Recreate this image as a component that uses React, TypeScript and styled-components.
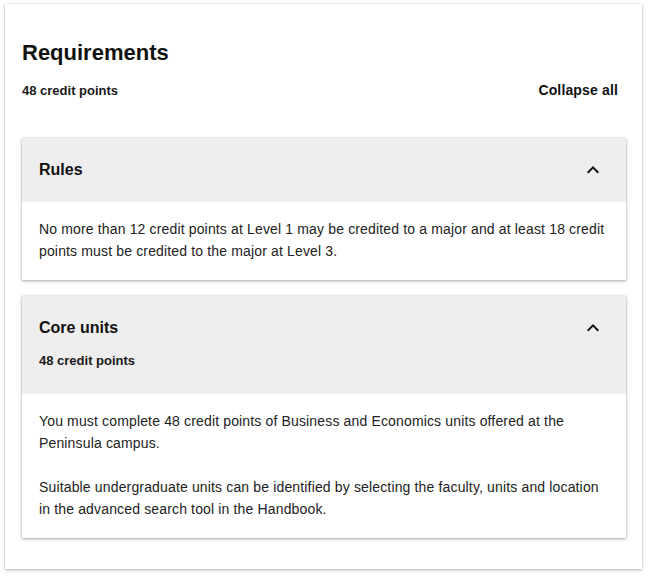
import React from "react";
import styled, { createGlobalStyle } from "styled-components";

const Global = createGlobalStyle`
  html, body { margin: 0; padding: 0; background: #ffffff; }
  body { font-family: "Liberation Sans", Arial, sans-serif; color: #1a1a1a; }
  * { box-sizing: border-box; }
`;

const Page = styled.div`
  padding: 4px 6px 8px 5px;
`;

const Panel = styled.section`
  background: #fff;
  box-shadow: 0 1px 3px rgba(0, 0, 0, 0.3), 0 0 1px rgba(0, 0, 0, 0.15);
  padding: 36px 16px 31px 17px;
`;

const Title = styled.h2`
  margin: 0;
  font-size: 22px;
  line-height: 26px;
  font-weight: 700;
  color: #111;
`;

const SummaryRow = styled.div`
  display: flex;
  align-items: center;
  justify-content: space-between;
  margin-top: 14px;
  height: 20px;
  padding-right: 8px;
`;

const Credits = styled.span`
  font-size: 13px;
  font-weight: 700;
  color: #1a1a1a;
`;

const CollapseAll = styled.button`
  border: 0;
  background: none;
  padding: 0;
  font-family: inherit;
  font-size: 14px;
  letter-spacing: 0.15px;
  font-weight: 700;
  color: #111;
  cursor: pointer;
`;

const List = styled.div`
  display: flex;
  flex-direction: column;
  gap: 16px;
  margin-top: 38px;
`;

const Card = styled.div`
  background: #fff;
  box-shadow: 0 1px 3px rgba(0, 0, 0, 0.35), 0 0 1px rgba(0, 0, 0, 0.12);
`;

const Header = styled.div`
  display: flex;
  align-items: flex-start;
  justify-content: space-between;
  background: #eeeeee;
  padding: 20px 21px 20px 17px;
`;

const HeaderText = styled.div`
  display: flex;
  flex-direction: column;
`;

const CardTitle = styled.h3`
  margin: 0;
  font-size: 16px;
  line-height: 24px;
  font-weight: 700;
  color: #111;
`;

const SubCredits = styled.div`
  margin: 11px 0 3px;
  font-size: 13px;
  line-height: 20px;
  font-weight: 700;
  color: #1a1a1a;
`;

const Toggle = styled.button`
  width: 24px;
  height: 24px;
  border: 0;
  padding: 0;
  background: none;
  display: flex;
  align-items: center;
  justify-content: center;
  color: #111;
  cursor: pointer;
`;

const Body = styled.div`
  padding: 16px 17px 18px;
  font-size: 14px;
  line-height: 22px;
  letter-spacing: 0.15px;
  color: #222;
`;

const Para = styled.p`
  margin: 0;
  & + & { margin-top: 22px; }
`;

const Chevron = () => (
  <svg width="24" height="24" viewBox="0 0 24 24" fill="currentColor">
    <path d="M12 8l-6 6 1.41 1.41L12 10.83l4.59 4.58L18 14z" />
  </svg>
);

type Section = { title: string; credits?: string; paras: string[] };

const sections: Section[] = [
  {
    title: "Rules",
    paras: [
      "No more than 12 credit points at Level 1 may be credited to a major and at least 18 credit points must be credited to the major at Level 3.",
    ],
  },
  {
    title: "Core units",
    credits: "48 credit points",
    paras: [
      "You must complete 48 credit points of Business and Economics units offered at the Peninsula campus.",
      "Suitable undergraduate units can be identified by selecting the faculty, units and location in the advanced search tool in the Handbook.",
    ],
  },
];

export default function App() {
  return (
    <>
      <Global />
      <Page>
        <Panel>
          <Title>Requirements</Title>
          <SummaryRow>
            <Credits>48 credit points</Credits>
            <CollapseAll>Collapse all</CollapseAll>
          </SummaryRow>
          <List>
            {sections.map((s) => (
              <Card key={s.title}>
                <Header>
                  <HeaderText>
                    <CardTitle>{s.title}</CardTitle>
                    {s.credits && <SubCredits>{s.credits}</SubCredits>}
                  </HeaderText>
                  <Toggle aria-label="Collapse">
                    <Chevron />
                  </Toggle>
                </Header>
                <Body>
                  {s.paras.map((p, i) => (
                    <Para key={i}>{p}</Para>
                  ))}
                </Body>
              </Card>
            ))}
          </List>
        </Panel>
      </Page>
    </>
  );
}
